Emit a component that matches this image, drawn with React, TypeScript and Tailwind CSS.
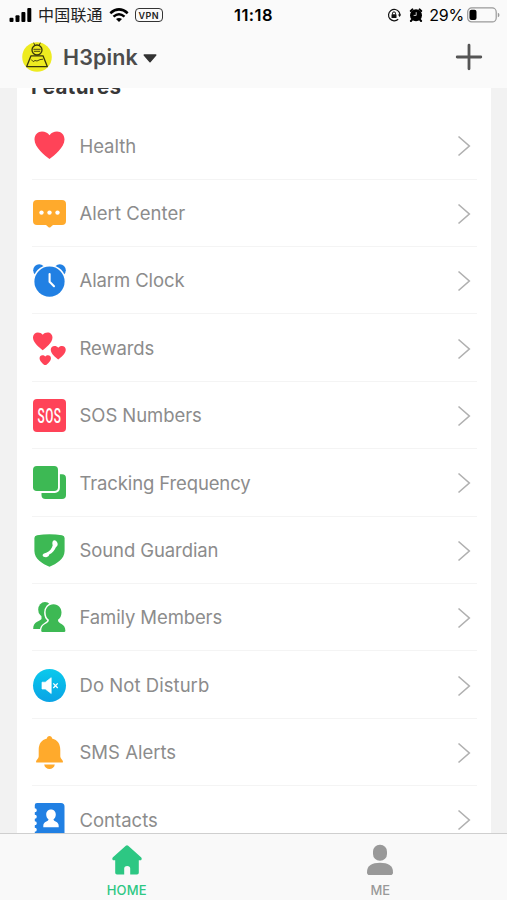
import React from "react";

const HEART =
  "M16.5 30C12 26.8 1.5 18.5 1.5 10.5C1.5 5.8 4.8 2.6 9 2.6C12.2 2.6 14.6 3.8 16.5 6.3C18.4 3.8 20.8 2.6 24 2.6C28.2 2.6 31.5 5.8 31.5 10.5C31.5 18.5 21 26.8 16.5 30Z";

const Icon = ({ children }: { children: React.ReactNode }) => (
  <svg viewBox="0 0 33 33" className="h-[33px] w-[33px] shrink-0">
    {children}
  </svg>
);

const features = [
  {
    title: "Health",
    text: "tracking-[-0.05px]",
    icon: (
      <Icon>
        <path d={HEART} fill="#ff4358" />
      </Icon>
    ),
  },
  {
    title: "Alert Center",
    text: "tracking-[0.03px]",
    icon: (
      <Icon>
        <path
          d="M4 3H29Q33 3 33 7V24Q33 28 29 28H20L17.7 30Q16.5 31 15.3 30L13 28H4Q0 28 0 24V7Q0 3 4 3Z"
          fill="#ffaa2c"
        />
        <g fill="#fff">
          <circle cx="8.5" cy="15.6" r="2.2" />
          <circle cx="16.5" cy="15.6" r="2.2" />
          <circle cx="24.5" cy="15.6" r="2.2" />
        </g>
      </Icon>
    ),
  },
  {
    title: "Alarm Clock",
    text: "tracking-[-0.1px]",
    icon: (
      <Icon>
        <g fill="#2180e3">
          <circle cx="6.2" cy="6.2" r="6" />
          <circle cx="26.8" cy="6.2" r="6" />
        </g>
        <circle cx="16.5" cy="17.6" r="16.6" fill="#fff" />
        <circle cx="16.5" cy="17.6" r="15.1" fill="#2180e3" />
        <path
          d="M16.6 10V17.8L21 22.2"
          fill="none"
          stroke="#fff"
          strokeWidth="2.1"
          strokeLinecap="round"
          strokeLinejoin="round"
        />
      </Icon>
    ),
  },
  {
    title: "Rewards",
    text: "tracking-[-0.1px]",
    icon: (
      <Icon>
        <g fill="#ff4358">
          <path d={HEART} transform="translate(-1 -1.3) scale(.65)" />
          <path d={HEART} transform="translate(17 12.6) scale(.5)" />
          <path d={HEART} transform="translate(6 22.2) scale(.38)" />
        </g>
      </Icon>
    ),
  },
  {
    title: "SOS Numbers",
    text: "tracking-[-0.07px]",
    icon: (
      <div className="flex h-[33px] w-[33px] items-center justify-center rounded-[4px] bg-[#ff4358]">
        <span className="inline-block scale-x-[.59] font-['Roboto'] text-[20px] leading-none font-medium tracking-[1px] text-white">
          SOS
        </span>
      </div>
    ),
  },
  {
    title: "Tracking Frequency",
    text: "tracking-[-0.13px]",
    icon: (
      <Icon>
        <rect x="8.5" y="8.3" width="24.5" height="24.7" rx="4" fill="#3db954" />
        <rect x="-2" y="-2" width="28.9" height="28.9" rx="5" fill="#fff" />
        <rect x="0" y="0" width="25" height="25" rx="3.8" fill="#3db954" />
      </Icon>
    ),
  },
  {
    title: "Sound Guardian",
    text: "tracking-[-0.1px]",
    icon: (
      <Icon>
        <path
          d="M4 1.2Q16.5-.8 29 1.2Q31.6 1.6 31.6 4V17C31.6 25 23.5 29.8 16.5 32.8C9.5 29.8 1.4 25 1.4 17V4Q1.4 1.6 4 1.2Z"
          fill="#3db954"
        />
        <path
          d="M20.6 6.4C22.6 6 24.2 7.6 24.6 9.6C25 11.6 24 12.7 22.9 13.2C21.6 16.4 19.4 18.8 16.2 20.6C16.1 22 15 23.1 13.2 23.2C11.3 23.3 9.6 22.4 9.6 21.2C9.6 20 11 19.3 13.2 18.7C16.6 17.3 19.1 14.4 19.7 11.2C19.1 9.4 19.2 7 20.6 6.4Z"
          fill="#fff"
        />
      </Icon>
    ),
  },
  {
    title: "Family Members",
    text: "tracking-[-0.12px]",
    icon: (
      <Icon>
        <g fill="#3db954">
          <ellipse cx="12" cy="8.7" rx="6.8" ry="7.6" />
          <path d="M8.5 13V18C7 20.5 0 20 .2 28H13L16 14Z" />
        </g>
        <path
          d="M20.5 3.2C25.5 3.2 28.5 7 28.5 11.5C28.5 14.8 27 17.5 25 18.8C24.6 23.5 32.4 22 32.4 29.7Q32.4 31 31 31H9.6Q8.2 31 8.2 29.7C8.2 22 16.2 23.5 15.9 18.8C13.9 17.5 12.6 14.8 12.6 11.5C12.6 7 15.5 3.2 20.5 3.2Z"
          fill="#3db954"
          stroke="#fff"
          strokeWidth="3"
          paintOrder="stroke"
        />
      </Icon>
    ),
  },
  {
    title: "Do Not Disturb",
    text: "tracking-[0.05px]",
    icon: (
      <div className="flex h-[33px] w-[33px] items-center justify-center rounded-full bg-linear-to-b from-[#0cc9ec] to-[#0ba3e5]">
        <Icon>
          <path
            d="M9 13.2H12.3L18.2 8.7V24.5L12.3 20H9Z"
            fill="#fff"
            stroke="#fff"
            strokeWidth=".7"
            strokeLinejoin="round"
          />
          <path d="M20.3 14.4L24.7 19M24.7 14.4L20.3 19" stroke="#fff" strokeWidth="1.3" />
        </Icon>
      </div>
    ),
  },
  {
    title: "SMS Alerts",
    text: "tracking-[0px]",
    icon: (
      <Icon>
        <g fill="#ffaa2c">
          <path d="M16.5 0C18 0 19 1 19.1 2.5C24.7 4 27.3 8 27.3 14V20.5C27.3 22.5 30 24.2 30 25.7Q30 26.6 29 26.6H4Q3 26.6 3 25.7C3 24.2 5.7 22.5 5.7 20.5V14C5.7 8 8.3 4 13.9 2.5C14 1 15 0 16.5 0Z" />
          <path d="M11.2 28.5H21.8C21.5 31.3 19 33 16.5 33C14 33 11.5 31.3 11.2 28.5Z" />
        </g>
      </Icon>
    ),
  },
  {
    title: "Contacts",
    text: "tracking-[0px]",
    icon: (
      <Icon>
        <path
          d="M4 0H28Q31.5 0 31.5 3.5V33H1.8V28.7A2 2 0 0 0 1.8 24.7V22.2A2 2 0 0 0 1.8 18.2V15.7A2 2 0 0 0 1.8 11.7V9.2A2 2 0 0 0 1.8 5.2V2Q1.8 0 4 0Z"
          fill="#2180e3"
        />
        <path
          d="M18 6.4C21 6.4 22.8 8.7 22.8 11.4C22.8 13.7 21.8 15.3 20.5 16.2C20.4 18.9 25.7 18 25.7 22.8V24.2H10.3V22.8C10.3 18 15.6 18.9 15.5 16.2C14.2 15.3 13.2 13.7 13.2 11.4C13.2 8.7 15 6.4 18 6.4Z"
          fill="#fff"
        />
      </Icon>
    ),
  },
];

const StatusBar = () => (
  <div className="grid h-[30px] grid-cols-[1fr_auto_1fr] items-center pr-[7px] pl-[9px] text-black">
    <div className="flex items-center">
      <svg viewBox="0 0 23 15" className="h-[15px] w-[23px]">
        <rect x="0.5" y="9.8" width="4" height="4.2" rx="1" />
        <rect x="6.5" y="7.2" width="4" height="6.8" rx="1" />
        <rect x="12.4" y="4" width="4" height="10" rx="1" />
        <rect x="18.3" y="0" width="4" height="14" rx="1" />
      </svg>
      <span className="ml-[6px] font-['Inter','Noto_Sans_CJK_SC',sans-serif] text-[16px] leading-none font-normal tracking-[0.2px] text-[#222]">
        中国联通
      </span>
      <svg viewBox="0 0 20 15" className="ml-[6px] h-[15px] w-[20px]" fill="none" stroke="#000">
        <path d="M1.3 5.2Q10-2.4 18.7 5.2" strokeWidth="2.6" />
        <path d="M4.5 8.6Q10 3.8 15.5 8.6" strokeWidth="2.5" />
        <path d="M10 14L7 11.1Q10 8.7 13 11.1Z" fill="#000" stroke="none" />
      </svg>
      <span className="ml-[6px] flex h-[14px] w-[28px] items-center justify-center rounded-[4px] border-[1.5px] border-[#333] font-['Inter',sans-serif] text-[9px] leading-none font-semibold tracking-[0.5px] text-[#222]">
        VPN
      </span>
    </div>
    <span className="mr-[2px] font-['Inter',sans-serif] text-[16.5px] leading-none font-semibold tracking-[0.4px]">
      11:18
    </span>
    <div className="flex items-center justify-end">
      <svg viewBox="0 0 14 14" className="h-[14px] w-[14px]" fill="none" stroke="#111">
        <path d="M12.1 4.1A5.7 5.7 0 1 0 11.2 11.2" strokeWidth="1.2" />
        <path d="M11 6.4H14.2L12.6 9Z" fill="#111" stroke="none" />
        <path d="M12.1 4.1Q12.9 5.5 12.8 7" strokeWidth="1.2" />
        <rect x="4.5" y="6.3" width="5" height="3.8" rx=".5" fill="#111" stroke="none" />
        <path d="M5.5 6.5V5.2Q5.5 3.9 7 3.9T8.5 5.2V6.5" strokeWidth="1" />
      </svg>
      <svg viewBox="0 0 14 14" className="ml-[8px] h-[14px] w-[14px]">
        <circle cx="7" cy="7.3" r="6" />
        <path
          d="M1.8 3L3.4 1.4M12.2 3L10.6 1.4M3 11.8L1.9 13M11 11.8L12.1 13"
          stroke="#000"
          strokeWidth="2"
          strokeLinecap="round"
        />
        <path d="M7.2 4.2V7.4H4.6" fill="none" stroke="#ddd" strokeWidth=".9" />
      </svg>
      <span className="ml-[6px] font-['Inter',sans-serif] text-[16px] leading-none tracking-[-0.2px]">
        29%
      </span>
      <svg viewBox="0 0 33 16" className="ml-[3px] h-[16px] w-[33px]">
        <rect x=".7" y=".9" width="28.5" height="14" rx="4" fill="none" stroke="#999" strokeWidth="1.2" />
        <rect x="2.5" y="2.7" width="7" height="10.4" rx="2" />
        <path d="M30.8 5.7Q32.5 6.2 32.5 8T30.8 10.2Z" fill="#999" />
      </svg>
    </div>
  </div>
);

const Avatar = () => (
  <svg viewBox="0 0 30 30" className="h-[30px] w-[30px]">
    <circle cx="15" cy="15" r="14.8" fill="#eeeb20" />
    <g fill="none" stroke="#38360c" strokeWidth="1.3" strokeLinejoin="round">
      <path d="M9 13.8H21L25.3 24.6H4.7Z" />
      <circle cx="15" cy="8" r="5" />
      <path d="M11.4 7.3H18.6M11.8 9.3H18.2M12.8 3.2L11.6.7M17.2 3.2L18.4.7" strokeWidth=".9" />
      <path d="M9.2 17.5L11.2 19.6L13 18.5L15 19L18 17.6L21 17.2" strokeWidth=".9" />
    </g>
  </svg>
);

export default function App() {
  return (
    <div className="flex h-[900px] w-[507px] flex-col overflow-hidden bg-[#f2f2f2] font-['Inter',sans-serif]">
      <header className="h-[88px] shrink-0 bg-[#fafafa]">
        <StatusBar />
        <div className="flex h-[54px] items-center pr-[24px] pl-[22px]">
          <Avatar />
          <h1 className="ml-[11px] pt-[2px] text-[21.5px] leading-none font-semibold tracking-[0.1px] text-[#4c4c4c]">
            H3pink
          </h1>
          <svg viewBox="0 0 14 9" className="mt-[2px] ml-[5px] h-[9px] w-[14px]">
            <path d="M1.2 1H12.8L7 7.8Z" fill="#333" stroke="#333" strokeWidth="1.4" strokeLinejoin="round" />
          </svg>
          <svg viewBox="0 0 28 28" className="ml-auto h-[28px] w-[28px]">
            <path d="M14 2.2V25.8M2.2 14H25.8" stroke="#555" strokeWidth="2.8" strokeLinecap="round" />
          </svg>
        </div>
      </header>

      <main className="min-h-0 flex-1 overflow-hidden pr-[16px] pl-[17px]">
        <div className="h-full overflow-hidden bg-white pr-[14px] pl-[14px]">
          {/* list is scrolled, the heading sits half under the header */}
          <h2 className="-mt-[14px] mb-[12.3px] h-[26px] text-[20.5px] leading-[26px] font-bold tracking-[0.35px] text-[#383838]">
            Features
          </h2>
          <ul className="pl-px">
            {features.map((feature) => (
              <li
                key={feature.title}
                className="flex h-[67.4px] items-center border-b border-[#f4f4f4] pt-px pr-[6px] pl-px"
              >
                {feature.icon}
                <span
                  className={`mt-px ml-[13.5px] text-[18.5px] whitespace-nowrap text-[#8c8c8c] ${feature.text}`}
                >
                  {feature.title}
                </span>
                <svg viewBox="0 0 14 22" className="mt-px ml-auto h-[22px] w-[14px]">
                  <path d="M1.5 1.5L12.3 11L1.5 20.5" fill="none" stroke="#b0b0b0" strokeWidth="1.6" />
                </svg>
              </li>
            ))}
          </ul>
        </div>
      </main>

      <nav className="grid h-[67px] shrink-0 grid-cols-2 border-t border-[#cfcfcf] bg-[#f9f9f9] pt-[10px] text-[13px] leading-none font-medium">
        <a className="flex flex-col items-center text-[#2dc783]">
          <svg viewBox="0 0 32 32" className="h-[32px] w-[32px]" fill="currentColor">
            <path d="M14.8 1.7Q16 .8 17.2 1.7L30.3 13.5Q31.5 15 30 16.3H27.8V28.8Q27.8 30.5 26 30.5H19.2V24.5Q19.2 22 16.2 22T13.2 24.5V30.5H6Q4.2 30.5 4.2 28.8V16.3H2Q.5 15 1.7 13.5Z" />
          </svg>
          <span className="mt-[8px] tracking-[0.2px]">HOME</span>
        </a>
        <a className="flex flex-col items-center text-[#999]">
          <svg viewBox="0 0 32 32" className="h-[32px] w-[32px]" fill="currentColor">
            <rect x="9" y=".8" width="14" height="16" rx="6.8" />
            <path d="M3 28.2C3 21.5 8 18.8 16 18.8S29 21.5 29 28.2Q29 31 26.5 31H5.5Q3 31 3 28.2Z" />
          </svg>
          <span className="mt-[8px]">ME</span>
        </a>
      </nav>
    </div>
  );
}
